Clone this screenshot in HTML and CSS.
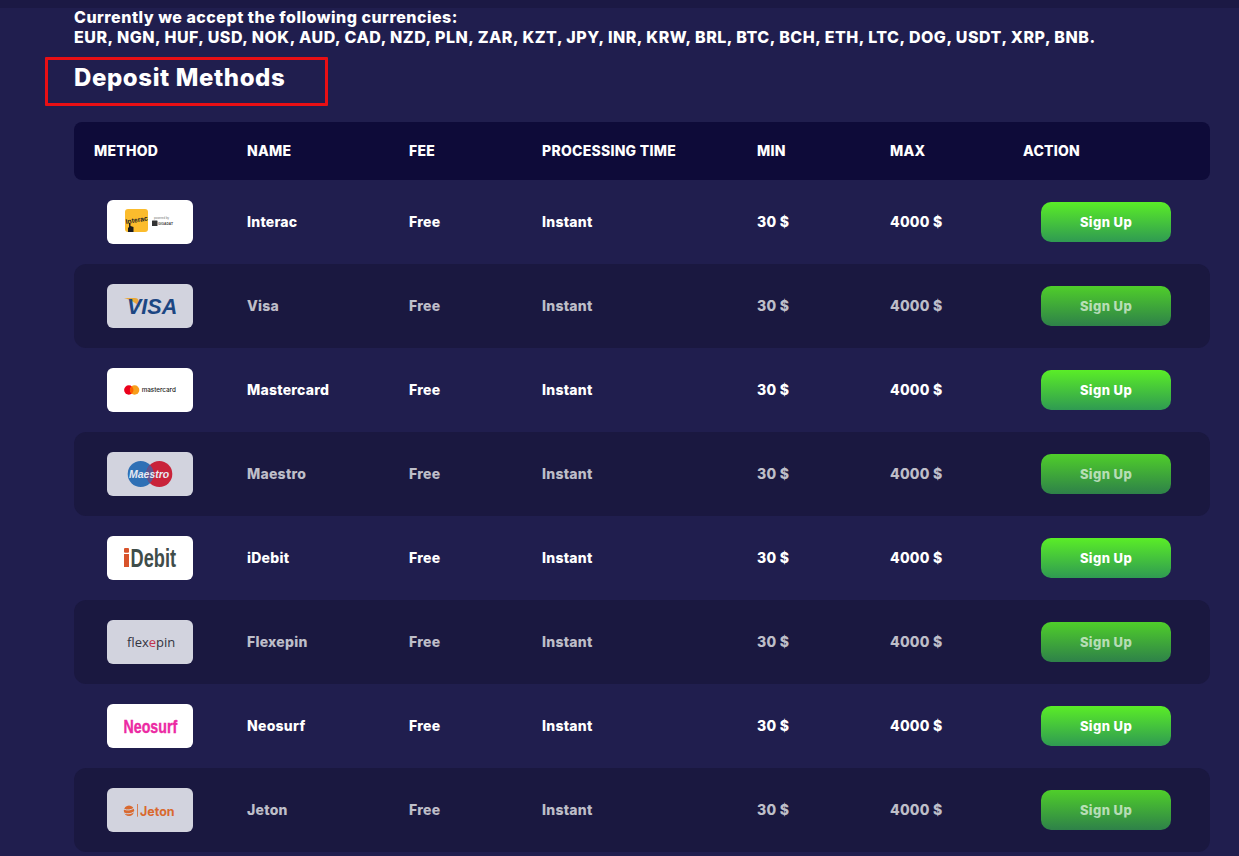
FILE: index.html
```html
<!DOCTYPE html>
<html lang="en">
<head>
<meta charset="utf-8">
<title>Deposit Methods</title>
<link rel="stylesheet" href="styles.css">
</head>
<body>
<div class="topstrip"></div>
<main class="content">
  <p class="currencies">Currently we accept the following currencies:<br>EUR, NGN, HUF, USD, NOK, AUD, CAD, NZD, PLN, ZAR, KZT, JPY, INR, KRW, BRL, BTC, BCH, ETH, LTC, DOG, USDT, XRP, BNB.</p>
  <div class="heading-wrap">
    <h2 class="heading">Deposit Methods</h2>
    <div class="highlight"></div>
  </div>
  <div class="table">
    <div class="row head">
      <div>METHOD</div><div>NAME</div><div>FEE</div><div>PROCESSING TIME</div><div>MIN</div><div>MAX</div><div>ACTION</div>
    </div>

    <div class="row">
      <div class="logo-cell"><div class="logo">
        <svg viewBox="0 0 86 44" width="86" height="44">
          <rect x="18" y="9" width="23" height="23" rx="3" fill="#fbbc2d"/>
          <text x="19" y="24" transform="rotate(-9 19 24)" class="lg-interac">Interac</text>
          <path d="M21 32v-4l1-1v-4h1.500v3l3 1v5z" fill="#1c1c1c"/>
          <text x="47" y="19" class="lg-tiny">powered by</text>
          <rect x="45" y="20.500" width="5.500" height="5.500" rx="0.500" fill="#333"/>
          <text x="51" y="25.300" class="lg-giga">GIGADAT</text>
        </svg>
      </div></div>
      <div>Interac</div><div>Free</div><div>Instant</div><div>30 $</div><div>4000 $</div>
      <div class="act"><a class="btn">Sign Up</a></div>
    </div>

    <div class="row dim">
      <div class="logo-cell"><div class="logo">
        <svg viewBox="0 0 86 44" width="86" height="44">
          <path d="M17 14h11c2 0 3 .8 3.400 2.500l1.600 7C30 19.500 24 15.800 17 14z" fill="#e8a83a"/>
          <text x="20" y="30" class="lg-visa">VISA</text>
        </svg>
      </div></div>
      <div>Visa</div><div>Free</div><div>Instant</div><div>30 $</div><div>4000 $</div>
      <div class="act"><a class="btn">Sign Up</a></div>
    </div>

    <div class="row">
      <div class="logo-cell"><div class="logo">
        <svg viewBox="0 0 86 44" width="86" height="44">
          <circle cx="21.800" cy="22" r="4.700" fill="#eb001b"/>
          <circle cx="27.600" cy="22" r="4.700" fill="#f79e1b"/>
          <path d="M24.700 18.300a4.700 4.700 0 0 1 0 7.400a4.700 4.700 0 0 1 0-7.400z" fill="#ff5f00"/>
          <text x="34.700" y="24" class="lg-mc">mastercard</text>
        </svg>
      </div></div>
      <div>Mastercard</div><div>Free</div><div>Instant</div><div>30 $</div><div>4000 $</div>
      <div class="act"><a class="btn">Sign Up</a></div>
    </div>

    <div class="row dim">
      <div class="logo-cell"><div class="logo">
        <svg viewBox="0 0 86 44" width="86" height="44">
          <circle cx="33.700" cy="22" r="13" fill="#2f70b5"/>
          <circle cx="52.300" cy="22" r="13" fill="#c9233a"/>
          <path d="M43 12.900a13 13 0 0 1 0 18.200a13 13 0 0 1 0-18.200z" fill="#5d5590"/>
          <text x="22" y="26" class="lg-maestro">Maestro</text>
        </svg>
      </div></div>
      <div>Maestro</div><div>Free</div><div>Instant</div><div>30 $</div><div>4000 $</div>
      <div class="act"><a class="btn">Sign Up</a></div>
    </div>

    <div class="row">
      <div class="logo-cell"><div class="logo">
        <svg viewBox="0 0 86 44" width="86" height="44">
          <rect x="17" y="12" width="5" height="4.700" rx="1" fill="#d8532b"/>
          <rect x="17" y="18" width="5" height="13" fill="#d8532b"/>
          <text transform="translate(23.500 31) scale(0.7 1)" class="lg-idebit">Debit</text>
        </svg>
      </div></div>
      <div>iDebit</div><div>Free</div><div>Instant</div><div>30 $</div><div>4000 $</div>
      <div class="act"><a class="btn">Sign Up</a></div>
    </div>

    <div class="row dim">
      <div class="logo-cell"><div class="logo">
        <svg viewBox="0 0 86 44" width="86" height="44">
          <text x="20" y="26.500" class="lg-flexepin">flex<tspan class="lg-flex-e">e</tspan>pin</text>
        </svg>
      </div></div>
      <div>Flexepin</div><div>Free</div><div>Instant</div><div>30 $</div><div>4000 $</div>
      <div class="act"><a class="btn">Sign Up</a></div>
    </div>

    <div class="row">
      <div class="logo-cell"><div class="logo">
        <svg viewBox="0 0 86 44" width="86" height="44">
          <text transform="translate(16.500 29) scale(0.79 1)" class="lg-neosurf">Neosurf</text>
        </svg>
      </div></div>
      <div>Neosurf</div><div>Free</div><div>Instant</div><div>30 $</div><div>4000 $</div>
      <div class="act"><a class="btn">Sign Up</a></div>
    </div>

    <div class="row dim">
      <div class="logo-cell"><div class="logo">
        <svg viewBox="0 0 86 44" width="86" height="44">
          <circle cx="22" cy="22.700" r="5.200" fill="#d9692f"/>
          <path d="M16.500 21q5.500 2.500 11-1.200M16.500 24.800q5.500 2.500 11-1.200" stroke="#d2d3de" stroke-width="1" fill="none"/>
          <rect x="30" y="16" width="0.800" height="12.700" fill="#d9692f"/>
          <text x="33" y="27.500" class="lg-jeton">Jeton</text>
        </svg>
      </div></div>
      <div>Jeton</div><div>Free</div><div>Instant</div><div>30 $</div><div>4000 $</div>
      <div class="act"><a class="btn">Sign Up</a></div>
    </div>
  </div>
</main>
</body>
</html>
```

FILE: styles.css
```css
* { box-sizing: border-box; }
html, body { margin: 0; padding: 0; }
body {
  background: #201e4e;
  color: #fff;
  font-family: "Inter", "Liberation Sans", sans-serif;
  font-weight: 800;
  height: 856px;
  overflow: hidden;
}
.topstrip { height: 8px; background: #1b1944; }
.content { padding: 0 29px 0 74px; }
.currencies {
  margin: -1px 0 1px;
  font-size: 16px;
  line-height: 20px;
  letter-spacing: 0.5px;
}
.heading-wrap { position: relative; height: 74px; }
.heading {
  margin: 0;
  padding-top: 14px;
  font-size: 24px;
  line-height: 32px;
  font-weight: 800;
  letter-spacing: 0.6px;
}
.highlight {
  position: absolute;
  left: -29px;
  top: 9px;
  width: 283px;
  height: 49px;
  border: 3px solid #e80f14;
  border-radius: 1px;
}
.row {
  display: grid;
  grid-template-columns: 153px 162px 133px 215px 133px 133px 207px;
  align-items: center;
  height: 84px;
  padding-left: 20px;
  font-size: 14px;
  letter-spacing: 0.25px;
  border-radius: 12px;
}
.row > div { padding-bottom: 2px; }
.row.head {
  height: 58px;
  background: #0e0b39;
  border-radius: 8px;
}
.row.dim { background: #1a1840; color: rgba(255,255,255,.72); }
.row > .logo-cell { padding: 0 0 0 13px; }
.logo {
  width: 86px;
  height: 44px;
  background: #fff;
  border-radius: 6px;
  overflow: hidden;
}
.logo svg { display: block; }
.dim .logo { background: #d2d3de; }
.row > .act { padding: 0 0 0 18px; }
.btn {
  display: flex;
  align-items: center;
  justify-content: center;
  width: 130px;
  height: 40px;
  border-radius: 10px;
  background: linear-gradient(180deg, #5aed27 0%, #2f9a52 100%);
  color: #fff;
  font-size: 13px;
  letter-spacing: 0.4px;
}
.dim .btn {
  background: linear-gradient(180deg, #4fce2a 0%, #2e8149 100%);
  color: rgba(255,255,255,.65);
}
.lg-interac { font: 700 6.800px "Liberation Sans", sans-serif; letter-spacing: 0; fill: #222; }
.lg-tiny { font: 400 2.900px "Liberation Sans", sans-serif; letter-spacing: 0; fill: #777; }
.lg-giga { font: 700 3.300px "Liberation Sans", sans-serif; letter-spacing: 0; fill: #444; }
.lg-visa { font: italic 700 21.500px "Liberation Sans", sans-serif; letter-spacing: 0; fill: #1c4682; }
.lg-mc { font: 500 6.300px "Inter", sans-serif; letter-spacing: 0; fill: #222; }
.lg-maestro { font: italic 700 10.500px "Liberation Sans", sans-serif; letter-spacing: 0; fill: #e6e8f2; }
.lg-idebit { font: 700 26px "Liberation Sans", sans-serif; letter-spacing: 0; fill: #3f4d4a; }
.lg-flexepin { font: 400 13px "Open Sans", sans-serif; letter-spacing: 0; fill: #33333f; }
.lg-flex-e { fill: #c2334d; }
.lg-neosurf { font: 700 18px "Liberation Sans", sans-serif; letter-spacing: 0; fill: #ec2aa3; stroke: #ec2aa3; stroke-width: 0.4px; }
.lg-jeton { font: 700 12.500px "Inter", sans-serif; letter-spacing: 0; fill: #d9692f; }
```
